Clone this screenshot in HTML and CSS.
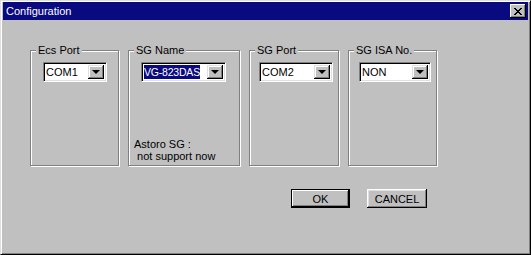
FILE: index.html
```html
<!DOCTYPE html>
<html lang="en">
<head>
  <meta charset="UTF-8">
  <title>Configuration</title>
  <link rel="stylesheet" href="styles.css">
</head>
<body>
  <div class="window">
    <div class="titlebar">
      <span class="title">Configuration</span>
      <button class="close" aria-label="Close">
        <svg width="8" height="7" viewBox="0 0 8 7"><path d="M0 0h2v1h1v1h2V1h1V0h2v1H7v1H6v1H5v1h1v1h1v1h1v1H6V6H5V5H3v1H2v1H0V6h1V5h1V4h1V3H2V2H1V1H0z" fill="#000"/></svg>
      </button>
    </div>

    <div class="content">
      <div class="groups">
        <div class="group">
          <span class="legend">Ecs Port</span>
          <div class="combo combo-ecs">
            <span class="value">COM1</span>
            <span class="arrow"></span>
          </div>
        </div>

        <div class="group group-wide">
          <span class="legend">SG Name</span>
          <div class="combo combo-name">
            <span class="value"><span class="selected">VG-823DAS</span></span>
            <span class="arrow"></span>
          </div>
          <div class="note">Astoro SG :<br>&nbsp;not support now</div>
        </div>

        <div class="group group-port">
          <span class="legend">SG Port</span>
          <div class="combo combo-port">
            <span class="value">COM2</span>
            <span class="arrow"></span>
          </div>
        </div>

        <div class="group">
          <span class="legend">SG ISA No.</span>
          <div class="combo combo-isa">
            <span class="value">NON</span>
            <span class="arrow"></span>
          </div>
        </div>
      </div>

      <div class="actions">
        <button class="btn btn-default">OK</button>
        <button class="btn">CANCEL</button>
      </div>
    </div>
  </div>
</body>
</html>
```

FILE: styles.css
```css
body {
  margin: 0;
  background: #c0c0c0;
  font-family: "Liberation Sans", Arial, sans-serif;
  font-size: 11px;
  color: #000;
}

.window {
  box-sizing: border-box;
  width: 531px;
  height: 255px;
  background: #c0c0c0;
  border: 1px solid;
  border-color: #dfdfdf #000 #000 #dfdfdf;
  box-shadow: inset 1px 1px 0 #fff, inset -1px -1px 0 #808080;
  padding: 1px 2px 2px 2px;
}

.titlebar {
  display: flex;
  align-items: center;
  justify-content: space-between;
  height: 18px;
  background: #0a0a80;
  color: #fff;
  padding: 0 2px 0 2px;
}

.title {
  font-size: 11px;
  padding-left: 1px;
}

.close {
  display: flex;
  align-items: center;
  justify-content: center;
  width: 16px;
  height: 14px;
  padding: 0;
  background: #c0c0c0;
  border: none;
  box-shadow: inset -1px -1px 0 #000, inset 1px 1px 0 #fff, inset -2px -2px 0 #808080;
}

.content {
  padding: 30px 0 0 27px;
}

.groups {
  display: flex;
  gap: 9px;
}

.group {
  position: relative;
  box-sizing: border-box;
  width: 89px;
  height: 116px;
  border: 1px solid #808080;
  box-shadow: 1px 1px 0 #fff, inset 1px 1px 0 #fff;
  padding: 11px 0 0 12px;
}

.group-wide {
  width: 112px;
}

.group-port {
  width: 90px;
  padding-left: 9px;
}

.group:last-child {
  padding-left: 10px;
}

.legend {
  position: absolute;
  top: -8px;
  left: 5px;
  padding: 0 2px;
  background: #c0c0c0;
  line-height: 14px;
}

.combo {
  display: flex;
  box-sizing: border-box;
  height: 20px;
  background: #fff;
  border: 1px solid;
  border-color: #808080 #fff #fff #808080;
  box-shadow: inset 1px 1px 0 #000, inset -1px -1px 0 #dfdfdf;
  padding: 2px 2px 2px 2px;
}

.combo-ecs { width: 64px; }
.combo-name { width: 85px; }
.combo-port { width: 74px; }
.combo-isa { width: 72px; }

.value {
  flex: 1;
  line-height: 14px;
  white-space: nowrap;
}

.selected {
  background: #0a0a80;
  color: #fff;
  padding: 1px 0;
  font-size: 10.5px;
  letter-spacing: -0.2px;
}

.arrow {
  position: relative;
  width: 16px;
  height: 14px;
  background: #c0c0c0;
  box-shadow: inset -1px -1px 0 #000, inset 1px 1px 0 #dfdfdf, inset -2px -2px 0 #808080, inset 2px 2px 0 #fff;
}

.arrow::after {
  content: "";
  position: absolute;
  left: 4px;
  top: 5px;
  border-left: 4px solid transparent;
  border-right: 4px solid transparent;
  border-top: 4px solid #000;
}

.note {
  margin-top: 56px;
  margin-left: -7px;
  line-height: 12px;
}

.actions {
  display: flex;
  gap: 17px;
  margin-top: 23px;
  padding-left: 261px;
}

.btn {
  box-sizing: border-box;
  width: 60px;
  height: 19px;
  padding: 0;
  font-family: "Liberation Sans", Arial, sans-serif;
  font-size: 11px;
  color: #000;
  background: #c0c0c0;
  border: none;
  box-shadow: inset -1px -1px 0 #000, inset 1px 1px 0 #fff, inset -2px -2px 0 #808080, inset 2px 2px 0 #dfdfdf;
}

.btn-default {
  width: 59px;
  border: 1px solid #000;
  box-shadow: inset -1px -1px 0 #000, inset 1px 1px 0 #fff, inset -2px -2px 0 #808080;
}
```
